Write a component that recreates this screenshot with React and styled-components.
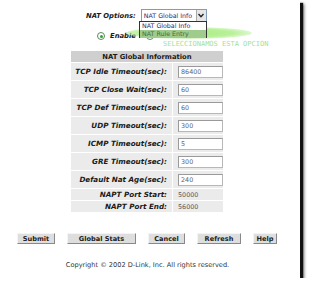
import React from "react";
import styled, { createGlobalStyle } from "styled-components";

const Global = createGlobalStyle`
  html, body { margin: 0; padding: 0; background: #fff; }
  body { font-family: "DejaVu Sans", Verdana, sans-serif; }
`;

const Frame = styled.div`
  position: relative;
  width: 300px;
  height: 278px;
  background: #fff;
  box-shadow: 3px 3px 1px #111, 4px 4px 3px rgba(0,0,0,0.6);
  display: flex;
  flex-direction: column;
  box-sizing: border-box;
  padding-top: 9px;
  font-family: "DejaVu Sans", Verdana, sans-serif;
  color: #1a1a1a;
`;

const OptionsRow = styled.div`
  display: flex;
  align-items: center;
  height: 13px;
  padding-left: 86px;
  gap: 5px;
`;

const Label = styled.span`
  font-size: 6.8px;
  font-weight: bold;
  font-style: italic;
  white-space: nowrap;
`;

const Select = styled.div`
  position: relative;
  width: 66px;
  height: 13px;
  box-sizing: border-box;
  border: 1px solid #7f9db9;
  display: flex;
  align-items: center;
  font-size: 6.3px;
  color: #2a2a6a;
  padding-left: 2px;
  white-space: nowrap;
  overflow: hidden;
`;

const Arrow = styled.div`
  position: absolute;
  right: 0;
  top: 0;
  width: 9px;
  height: 11px;
  background: #e6e6e6;
  border-left: 1px solid #aaa;
  display: flex;
  align-items: center;
  justify-content: center;
`;

const DropList = styled.div`
  position: absolute;
  left: 139px;
  top: 21px;
  width: 68px;
  height: 17px;
  box-sizing: border-box;
  border: 1px solid #333;
  background: #fff;
  z-index: 3;
  display: flex;
  flex-direction: column;
`;

const DropItem = styled.div`
  height: 8px;
  line-height: 8px;
  font-size: 6.3px;
  padding-left: 2px;
  color: ${p => (p.$active ? "#3e6e3a" : "#2a2a6a")};
  background: ${p => (p.$active ? "#9fcb8c" : "#fff")};
  white-space: nowrap;
`;

const Glow = styled.div`
  position: absolute;
  left: 126px;
  top: 27px;
  width: 126px;
  height: 12px;
  border-radius: 50%;
  background: radial-gradient(ellipse at 48% 50%, rgba(165,235,125,0.95) 0%, rgba(172,238,135,0.85) 50%, rgba(200,245,180,0.3) 80%, rgba(255,255,255,0) 100%);
  z-index: 2;
`;

const Annotation = styled.div`
  position: absolute;
  left: 163px;
  top: 40px;
  font-family: "DejaVu Sans Mono", "Liberation Mono", monospace;
  font-size: 7px;
  color: #a3e296;
  white-space: nowrap;
  z-index: 2;
`;

const RadioRow = styled.div`
  display: flex;
  align-items: center;
  height: 10px;
  margin-top: 9px;
  padding-left: 97px;
`;

const RadioItem = styled.div`
  display: flex;
  align-items: center;
  gap: 5px;
  margin-right: 10px;
`;

const Radio = styled.span`
  width: 6px;
  height: 6px;
  border-radius: 50%;
  border: 1px solid #5a8a5a;
  background: #fff;
  display: flex;
  align-items: center;
  justify-content: center;
  &::after {
    content: "";
    width: 3px;
    height: 3px;
    border-radius: 50%;
    background: ${p => (p.$checked ? "#3d9a3d" : "transparent")};
  }
`;

const Table = styled.table`
  margin-top: 10px;
  margin-left: 71px;
  width: 152px;
  border-collapse: collapse;
  background: #ebebeb;
`;

const HeadCell = styled.th`
  height: 11px;
  padding: 0;
  background: #cfcfcf;
  font-size: 6.8px;
  font-weight: bold;
  text-align: center;
  border-bottom: 1px solid #fff;
`;

const Row = styled.tr`
  height: ${p => (p.$short ? "12px" : "18px")};
`;

const KeyCell = styled.td`
  width: 100px;
  padding: 0 5px 0 0;
  text-align: right;
  font-size: 7.2px;
  font-weight: bold;
  font-style: italic;
  white-space: nowrap;
  border-bottom: 1px solid #fff;
  border-right: 1px solid #fff;
`;

const ValCell = styled.td`
  padding: 0 0 0 5px;
  font-size: 6.4px;
  color: #555;
  border-bottom: 1px solid #fff;
`;

const Input = styled.div`
  width: 45px;
  height: 12px;
  box-sizing: border-box;
  background: #fff;
  border: 1px solid #b7b7b7;
  border-top-color: #9a9a9a;
  border-left-color: #9a9a9a;
  font-size: 6.4px;
  color: #666;
  display: flex;
  align-items: center;
  padding-left: 2px;
`;

const Buttons = styled.div`
  display: flex;
  align-items: center;
  margin-top: 20px;
  padding-left: 17px;
  gap: 12px;
`;

const Button = styled.div`
  width: ${p => p.$w}px;
  height: 11px;
  box-sizing: border-box;
  background: #dedede;
  border-right: 1px solid #888;
  border-bottom: 1px solid #888;
  border-top: 1px solid #f4f4f4;
  border-left: 1px solid #f4f4f4;
  font-size: 6.6px;
  font-weight: bold;
  color: #222;
  display: flex;
  align-items: center;
  justify-content: center;
`;

const Copyright = styled.div`
  margin-top: 17px;
  text-align: center;
  padding-right: 5px;
  font-size: 6.6px;
  color: #333;
`;

const rows = [
  ["TCP Idle Timeout(sec):", "86400"],
  ["TCP Close Wait(sec):", "60"],
  ["TCP Def Timeout(sec):", "60"],
  ["UDP Timeout(sec):", "300"],
  ["ICMP Timeout(sec):", "5"],
  ["GRE Timeout(sec):", "300"],
  ["Default Nat Age(sec):", "240"],
];

const plain = [
  ["NAPT Port Start:", "50000"],
  ["NAPT Port End:", "56000"],
];

const buttons = [
  ["Submit", 38],
  ["Global Stats", 69],
  ["Cancel", 37],
  ["Refresh", 44],
  ["Help", 24],
];

export default function App() {
  return (
    <>
      <Global />
      <Frame>
        <OptionsRow>
          <Label>NAT Options:</Label>
          <Select>
            NAT Global Info
            <Arrow>
              <svg width="6" height="5" viewBox="0 0 6 5">
                <path d="M0.5 1 L3 3.8 L5.5 1" fill="none" stroke="#222" strokeWidth="1.4" />
              </svg>
            </Arrow>
          </Select>
        </OptionsRow>
        <DropList>
          <DropItem>NAT Global Info</DropItem>
          <DropItem $active>NAT Rule Entry</DropItem>
        </DropList>
        <Glow />
        <Annotation>SELECCIONAMOS ESTA OPCION</Annotation>
        <RadioRow>
          <RadioItem>
            <Radio $checked />
            <Label>Enable</Label>
          </RadioItem>
          <RadioItem>
            <Radio />
            <Label>Disable</Label>
          </RadioItem>
        </RadioRow>
        <Table>
          <thead>
            <tr>
              <HeadCell colSpan={2}>NAT Global Information</HeadCell>
            </tr>
          </thead>
          <tbody>
            {rows.map(([k, v]) => (
              <Row key={k}>
                <KeyCell>{k}</KeyCell>
                <ValCell>
                  <Input>{v}</Input>
                </ValCell>
              </Row>
            ))}
            {plain.map(([k, v]) => (
              <Row key={k} $short>
                <KeyCell>{k}</KeyCell>
                <ValCell>{v}</ValCell>
              </Row>
            ))}
          </tbody>
        </Table>
        <Buttons>
          {buttons.map(([t, w]) => (
            <Button key={t} $w={w}>{t}</Button>
          ))}
        </Buttons>
        <Copyright>Copyright © 2002 D-Link, Inc. All rights reserved.</Copyright>
      </Frame>
    </>
  );
}
